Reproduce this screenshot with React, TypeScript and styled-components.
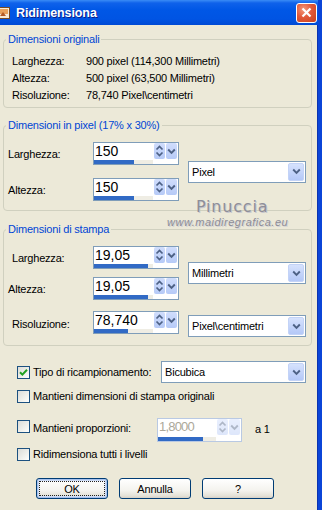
import React from "react";
import styled, { createGlobalStyle } from "styled-components";

const Global = createGlobalStyle`
  html, body { margin: 0; padding: 0; background: #ECE9D8; }
  body { font-family: "Liberation Sans", Arial, sans-serif; font-size: 11px; }
`;

const Window = styled.div`
  position: relative;
  width: 322px;
  height: 510px;
  box-sizing: border-box;
  background: #ECE9D8;
  border-right: 4px solid #0B45D8;
  box-shadow: inset -1px 0 0 #0A32B0;
  overflow: hidden;
  display: flex;
  flex-direction: column;
  color: #000;
  font-family: "Liberation Sans", Arial, sans-serif;
  font-size: 11px;
  letter-spacing: -0.2px;
`;

const TitleBar = styled.div`
  flex: none;
  height: 25px;
  margin-right: -4px;
  display: flex;
  align-items: center;
  background: linear-gradient(
    to bottom,
    #3A8CF6 0px,
    #0F62EA 3px,
    #0057E6 10px,
    #0054E3 19px,
    #004AD4 25px
  );
`;

const AppIcon = styled.svg`
  flex: none;
  margin-left: -2px;
`;

const Title = styled.span`
  margin-left: 5px;
  color: #fff;
  font-weight: bold;
  font-size: 12.5px;
  letter-spacing: -0.1px;
  text-shadow: 1px 1px 0 #0A1E8A;
`;

const CloseButton = styled.div`
  margin-left: auto;
  margin-right: 5px;
  width: 21px;
  height: 20px;
  box-sizing: border-box;
  border: 1px solid #fff;
  border-radius: 3px;
  background: radial-gradient(circle at 35% 30%, #F39A7C 0%, #E2593A 45%, #C8411E 100%);
  display: flex;
  align-items: center;
  justify-content: center;
`;

const Body = styled.div`
  display: flex;
  flex-direction: column;
  padding: 8px 6px 0 3px;
`;

const Group = styled.fieldset<{ $mt?: number }>`
  margin: ${(p) => p.$mt ?? 0}px 0 0 0;
  padding: 0 5px 0 4px;
  border: 1px solid #D0D0BF;
  border-radius: 4px;
  min-inline-size: 0;
`;

const Legend = styled.legend`
  color: #0046D5;
  padding: 0 2px;
  margin-left: -2px;
  line-height: 13px;
  font-size: 11px;
`;

const InfoGrid = styled.div`
  display: grid;
  grid-template-columns: 74px 1fr;
  grid-auto-rows: 17px;
  align-items: center;
  padding: 6px 0 4px 4px;
`;

const FieldGrid = styled.div<{ $gap: number; $pt: number; $pb: number }>`
  display: grid;
  grid-template-columns: 76px 86px 118px;
  column-gap: 9px;
  row-gap: ${(p) => p.$gap}px;
  align-items: center;
  padding: ${(p) => p.$pt}px 0 ${(p) => p.$pb}px 0;
`;

const FieldLabel = styled.span<{ $indent?: number; $mt?: number }>`
  grid-column: 1;
  padding-left: ${(p) => p.$indent ?? 0}px;
  margin-top: ${(p) => p.$mt ?? 0}px;
`;

const SpinBox = styled.div<{ $w?: number; $h?: number; $disabled?: boolean }>`
  display: flex;
  width: ${(p) => p.$w ?? 86}px;
  height: ${(p) => p.$h ?? 23}px;
  box-sizing: border-box;
  border: 1px solid ${(p) => (p.$disabled ? "#B9C9E3" : "#7F9DB9")};
  background: #fff;
  flex: none;
`;

const SpinInput = styled.div`
  flex: 1;
  display: flex;
  flex-direction: column;
  min-width: 0;
`;

const SpinText = styled.span<{ $disabled?: boolean }>`
  font-size: ${(p) => (p.$disabled ? 13 : 14)}px;
  letter-spacing: ${(p) => (p.$disabled ? -0.8 : 0)}px;
  line-height: 16px;
  padding-left: 1px;
  color: ${(p) => (p.$disabled ? "#ACA899" : "#000")};
`;

const Track = styled.div`
  margin-top: auto;
  height: 4px;
  background: #EFEDE4;
`;

const Fill = styled.div`
  height: 100%;
  background: #316AC5;
`;

const SpinButtons = styled.div<{ $disabled?: boolean }>`
  display: flex;
  align-self: flex-start;
  gap: 1px;
  padding: 0 1px 0 1px;
  opacity: ${(p) => (p.$disabled ? 0.45 : 1)};
`;

const SpinKnob = styled.div<{ $w: number }>`
  width: ${(p) => p.$w}px;
  height: 16px;
  border-radius: 2px;
  background: linear-gradient(to bottom, #D0DDFC, #B6CAF7);
  display: flex;
  align-items: center;
  justify-content: center;
`;

const SpinWrap = styled.div`
  grid-column: 2;
  align-self: start;
  padding-top: 3px;
`;

const Combo = styled.div<{ $w?: number; $span?: boolean; $mt?: number }>`
  grid-column: 3;
  ${(p) => (p.$span ? "grid-row: 1 / span 2;" : "")}
  align-self: ${(p) => (p.$mt ? "start" : "center")};
  margin-top: ${(p) => p.$mt ?? 0}px;
  width: ${(p) => p.$w ?? 118}px;
  height: 22px;
  box-sizing: border-box;
  border: 1px solid #7F9DB9;
  background: #fff;
  display: flex;
  align-items: center;
  flex: none;
`;

const ComboText = styled.span`
  flex: 1;
  padding-left: 3px;
`;

const ComboButton = styled.div`
  width: 16px;
  height: 18px;
  margin-right: 1px;
  box-sizing: border-box;
  border: 1px solid #C3D3F7;
  border-radius: 2px;
  background: linear-gradient(to bottom, #D6E2FD, #B4C8F7);
  display: flex;
  align-items: center;
  justify-content: center;
`;

const Options = styled.div`
  display: flex;
  flex-direction: column;
  padding: 15px 0 0 14px;
`;

const CheckRow = styled.div<{ $mt?: number; $h: number; $top?: boolean }>`
  display: flex;
  align-items: ${(p) => (p.$top ? "flex-start" : "center")};
  height: ${(p) => p.$h}px;
  margin-top: ${(p) => p.$mt ?? 0}px;
`;

const Box = styled.div<{ $mt?: number }>`
  flex: none;
  width: 13px;
  height: 13px;
  margin-top: ${(p) => p.$mt ?? 0}px;
  box-sizing: border-box;
  border: 1px solid #1C5180;
  background: linear-gradient(135deg, #DCDCD7 0%, #F4F4F0 70%, #FFFFFF 100%);
  display: flex;
  align-items: center;
  justify-content: center;
`;

const CheckText = styled.span<{ $w?: number; $mt?: number }>`
  margin-left: 3px;
  ${(p) => (p.$w ? `width: ${p.$w}px; flex: none;` : "")}
  margin-top: ${(p) => p.$mt ?? 0}px;
  line-height: 17px;
`;

const After = styled.span`
  margin-left: 13px;
  margin-top: 3px;
  line-height: 17px;
`;

const ButtonRow = styled.div`
  display: flex;
  gap: 11px;
  padding: 15px 0 0 33px;
`;

const Button = styled.button<{ $default?: boolean }>`
  width: 72px;
  height: 21px;
  padding: 0;
  box-sizing: border-box;
  border: 1px solid #003C74;
  border-radius: 3px;
  background: linear-gradient(to bottom, #FFFFFF 0%, #F4F3EE 60%, #E3E0D6 90%, #D6D0C5 100%);
  font-family: "Liberation Sans", Arial, sans-serif;
  font-size: 11px;
  letter-spacing: -0.2px;
  color: #000;
  box-shadow: ${(p) => (p.$default ? "inset 0 0 0 1px #A8C2EE, inset 0 0 0 2px #CEDCF5" : "none")};
  outline: ${(p) => (p.$default ? "1px dotted #222" : "none")};
  outline-offset: -4px;
`;

const Pinuccia = styled.div`
  position: absolute;
  left: 196px;
  top: 197px;
  font-family: "DejaVu Sans", sans-serif;
  font-size: 16px;
  letter-spacing: 0.8px;
  color: #8E8E98;
  text-shadow: 1px 1px 0 #C8C8CE;
`;

const Site = styled.div`
  position: absolute;
  left: 167px;
  top: 216px;
  font-family: "Liberation Sans", Arial, sans-serif;
  font-style: italic;
  font-size: 11px;
  letter-spacing: 0.5px;
  color: #8C8C96;
  text-shadow: 1px 1px 0 #D2D2D6;
`;

const UpDown = () => (
  <svg width="9" height="14" viewBox="0 0 9 14">
    <polyline points="1.5,5.5 4.5,2.5 7.5,5.5" fill="none" stroke="#4D6185" strokeWidth="1.7" />
    <polyline points="1.5,8.5 4.5,11.5 7.5,8.5" fill="none" stroke="#4D6185" strokeWidth="1.7" />
  </svg>
);

const Chevron = () => (
  <svg width="9" height="7" viewBox="0 0 9 7">
    <polyline points="1.2,1.5 4.5,4.8 7.8,1.5" fill="none" stroke="#4D6185" strokeWidth="1.9" />
  </svg>
);

function Spin({ value, pct, disabled, w, h }: { value: string; pct: number; disabled?: boolean; w?: number; h?: number }) {
  return (
    <SpinBox $disabled={disabled} $w={w} $h={h}>
      <SpinInput>
        <SpinText $disabled={disabled}>{value}</SpinText>
        <Track>
          <Fill style={{ width: `${pct}%` }} />
        </Track>
      </SpinInput>
      <SpinButtons $disabled={disabled}>
        <SpinKnob $w={11}>
          <UpDown />
        </SpinKnob>
        <SpinKnob $w={11}>
          <Chevron />
        </SpinKnob>
      </SpinButtons>
    </SpinBox>
  );
}

function Select({ text, w, span, mt }: { text: string; w?: number; span?: boolean; mt?: number }) {
  return (
    <Combo $w={w} $span={span} $mt={mt}>
      <ComboText>{text}</ComboText>
      <ComboButton>
        <Chevron />
      </ComboButton>
    </Combo>
  );
}

const Check = () => (
  <svg width="9" height="9" viewBox="0 0 9 9">
    <polyline points="1,4.2 3.4,6.6 8,1.8" fill="none" stroke="#21A121" strokeWidth="2" />
  </svg>
);

export default function App() {
  return (
    <>
      <Global />
      <Window>
        <TitleBar>
          <AppIcon width="13" height="14" viewBox="0 0 13 14">
            <rect x="0.5" y="1.5" width="11" height="11" fill="#F6EBD6" stroke="#7A4B22" />
            <rect x="2" y="3" width="8" height="5" fill="#E9A25A" />
            <path d="M2 10 L5 6 L8 10 Z" fill="#B45A24" />
          </AppIcon>
          <Title>Ridimensiona</Title>
          <CloseButton>
            <svg width="11" height="11" viewBox="0 0 11 11">
              <path d="M1.5 1.5 L9.5 9.5 M9.5 1.5 L1.5 9.5" stroke="#fff" strokeWidth="2.2" />
            </svg>
          </CloseButton>
        </TitleBar>
        <Body>
          <Group>
            <Legend>Dimensioni originali</Legend>
            <InfoGrid>
              <span>Larghezza:</span>
              <span>900 pixel (114,300 Millimetri)</span>
              <span>Altezza:</span>
              <span>500 pixel (63,500 Millimetri)</span>
              <span>Risoluzione:</span>
              <span>78,740 Pixel\centimetri</span>
            </InfoGrid>
          </Group>

          <Group $mt={11}>
            <Legend>Dimensioni in pixel (17% x 30%)</Legend>
            <FieldGrid $gap={13} $pt={10} $pb={9}>
              <FieldLabel>Larghezza:</FieldLabel>
              <Spin value="150" pct={68} />
              <Select text="Pixel" span />
              <FieldLabel>Altezza:</FieldLabel>
              <Spin value="150" pct={68} />
            </FieldGrid>
          </Group>

          <Group $mt={12}>
            <Legend>Dimensioni di stampa</Legend>
            <FieldGrid $gap={8} $pt={10} $pb={8}>
              <FieldLabel $indent={4}>Larghezza:</FieldLabel>
              <Spin value="19,05" pct={92} />
              <Select text="Millimetri" span />
              <FieldLabel>Altezza:</FieldLabel>
              <Spin value="19,05" pct={92} />
              <FieldLabel $indent={4} $mt={3}>Risoluzione:</FieldLabel>
              <SpinWrap>
                <Spin value="78,740" pct={58} />
              </SpinWrap>
              <Select text="Pixel\centimetri" mt={7} />
            </FieldGrid>
          </Group>

          <Options>
            <CheckRow $h={22}>
              <Box>
                <Check />
              </Box>
              <CheckText $w={128}>Tipo di ricampionamento:</CheckText>
              <Select text="Bicubica" w={145} />
            </CheckRow>
            <CheckRow $h={17} $mt={5}>
              <Box />
              <CheckText>Mantieni dimensioni di stampa originali</CheckText>
            </CheckRow>
            <CheckRow $h={24} $mt={13} $top>
              <Box $mt={2} />
              <CheckText $w={124} $mt={2}>Mantieni proporzioni:</CheckText>
              <Spin value="1,8000" pct={78} disabled w={85} h={24} />
              <After>a 1</After>
            </CheckRow>
            <CheckRow $h={17} $mt={4}>
              <Box />
              <CheckText>Ridimensiona tutti i livelli</CheckText>
            </CheckRow>
          </Options>

          <ButtonRow>
            <Button $default>OK</Button>
            <Button>Annulla</Button>
            <Button>?</Button>
          </ButtonRow>
        </Body>
        <Pinuccia>Pinuccia</Pinuccia>
        <Site>www.maidiregrafica.eu</Site>
      </Window>
    </>
  );
}
